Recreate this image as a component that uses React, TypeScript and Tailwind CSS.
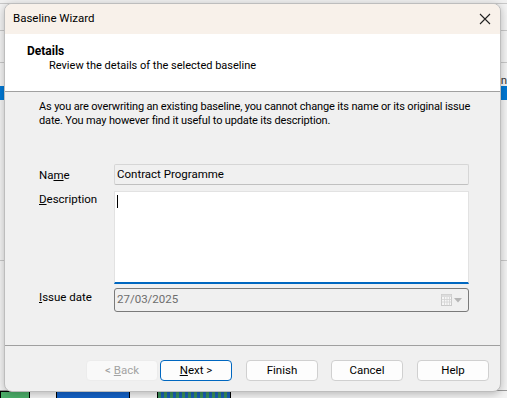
const font = { fontFamily: 'Roboto, "Liberation Sans", Arial, sans-serif' };

const Btn = ({ children, primary, disabled }: { children: React.ReactNode; primary?: boolean; disabled?: boolean }) => (
  <button
    className={
      "w-[72px] h-[21px] rounded-[4px] text-[11.5px] leading-none flex items-center justify-center " +
      (disabled
        ? "bg-[#f9f9f9] text-[#a3a3a3] border border-[#ececec]"
        : primary
        ? "bg-[#fdfdfd] text-black border border-[#0067c0]"
        : "bg-[#fdfdfd] text-black border border-[#d0d0d0]")
    }
  >
    {children}
  </button>
);

export default function App() {
  return (
    <div className="relative w-[507px] h-[398px] overflow-hidden bg-[#f3f3f3] text-black text-[11.5px]" style={font}>
      {/* parent window behind */}
      <div className="flex flex-col h-full">
        <div className="h-[4px] bg-[#f0f0f0] border-b border-[#c8c8c8]"></div>
        <div className="h-[26px]"></div>
        <div className="h-[1px] bg-[#c8c8c8]"></div>
        <div className="h-[31px]"></div>
        <div className="h-[1px] bg-[#c8c8c8]"></div>
        <div className="h-[23px] flex justify-end text-[#333]"><span className="mt-[9px]">n</span></div>
        <div className="h-[14px] bg-[#0078d4]"></div>
        <div className="h-[160px]"></div>
        <div className="h-[1px] bg-[#c8c8c8]"></div>
        <div className="flex-1"></div>
        <div className="h-[8px] flex items-start border-t border-[#999]">
          <div className="w-[30px] h-[8px] bg-[#4caf6a] border border-black"></div>
          <div className="ml-[26px] w-[74px] h-[8px] bg-[#1462c8] border border-black"></div>
          <div className="ml-[27px] w-[74px] h-[8px] border border-black bg-[repeating-linear-gradient(90deg,#3a8f5a_0px,#3a8f5a_3px,#1a5fb4_3px,#1a5fb4_6px)]"></div>
        </div>
      </div>

      {/* dialog */}
      <div className="absolute left-[4px] top-[3px] w-[497px] h-[389px] flex flex-col rounded-[8px] overflow-hidden border border-[#bdbdbd] bg-[#f0f0f0] shadow-[0_2px_8px_rgba(0,0,0,0.25)]">
        <div className="h-[30px] bg-[#f8f1ea] flex items-center justify-between pl-[8px] pr-[8px] shrink-0">
          <span className="text-[11.5px]">Baseline Wizard</span>
          <svg width="12" height="12" viewBox="0 0 12 12" className="mr-[1px]">
            <path d="M1 1 L11 11 M11 1 L1 11" stroke="#222" strokeWidth="1.1" />
          </svg>
        </div>
        <div className="h-[57px] bg-white shrink-0 pl-[22px] pt-[10px]">
          <div className="font-bold leading-[14px] text-[12px]">Details</div>
          <div className="leading-[14px] pl-[22px] mt-[1px] text-[11px]">Review the details of the selected baseline</div>
        </div>
        <div className="h-[1px] bg-[#a0a0a0] shrink-0"></div>
        <div className="flex-1 flex flex-col pl-[34px] pt-[8px]">
          <p className="leading-[14px] w-[460px] text-[11px] tracking-[-0.15px] whitespace-nowrap">
            As you are overwriting an existing baseline, you cannot change its name or its original issue
            <br />
            date. You may however find it useful to update its description.
          </p>
          <div className="mt-[36px] flex">
            <div className="w-[75px] pt-[3px]">Na<span className="underline">m</span>e</div>
            <div className="w-[355px] h-[21px] bg-[#f0f0f0] border border-[#d6d6d6] border-b-[#c0c0c0] rounded-[2px] flex items-center pl-[2px]">Contract Programme</div>
          </div>
          <div className="mt-[6px] flex">
            <div className="w-[75px]"><span className="underline">D</span>escription</div>
            <div className="w-[355px] h-[93px] bg-white border border-[#e2e2e2] border-b-2 border-b-[#0067c0] relative">
              <div className="absolute left-[2px] top-[3px] w-[1px] h-[13px] bg-black"></div>
            </div>
          </div>
          <div className="mt-[4px] flex items-center">
            <div className="w-[75px] -mt-[4px]"><span className="underline">I</span>ssue date</div>
            <div className="w-[355px] h-[24px] bg-[#f0f0f0] border border-[#7a7a7a] rounded-[3px] text-[#6d6d6d] flex items-center justify-between pl-[2px] pr-[6px]">
              <span>27/03/2025</span>
              <div className="flex items-center gap-[2px]">
                <svg width="11" height="12" viewBox="0 0 11 12">
                  <rect x="0.5" y="0.5" width="10" height="11" fill="#f6f6f6" stroke="#c9c9c9" />
                  <rect x="0.5" y="0.5" width="10" height="2.5" fill="#dcdcdc" />
                  <path d="M0.5 5.5 H10.5 M0.5 8 H10.5 M3.5 3 V11.5 M6 3 V11.5 M8.5 3 V11.5" stroke="#d3d3d3" strokeWidth="0.8" />
                </svg>
                <svg width="8" height="5" viewBox="0 0 8 5">
                  <path d="M0 0 H8 L4 4.5 Z" fill="#b5b5b5" />
                </svg>
              </div>
            </div>
          </div>
          <div className="flex-1"></div>
        </div>
        <div className="h-[1px] bg-[#a0a0a0] shrink-0"></div>
        <div className="h-[45px] shrink-0 flex items-start pt-[14px] pl-[81px]">
          <Btn disabled>&lt; <span className="underline ml-[3px]">B</span>ack</Btn>
          <div className="ml-[2px]"><Btn primary><span className="underline">N</span>ext &gt;</Btn></div>
          <div className="ml-[14px]"><Btn>Finish</Btn></div>
          <div className="ml-[13px]"><Btn>Cancel</Btn></div>
          <div className="ml-[14px]"><Btn>Help</Btn></div>
        </div>
      </div>
    </div>
  );
}
